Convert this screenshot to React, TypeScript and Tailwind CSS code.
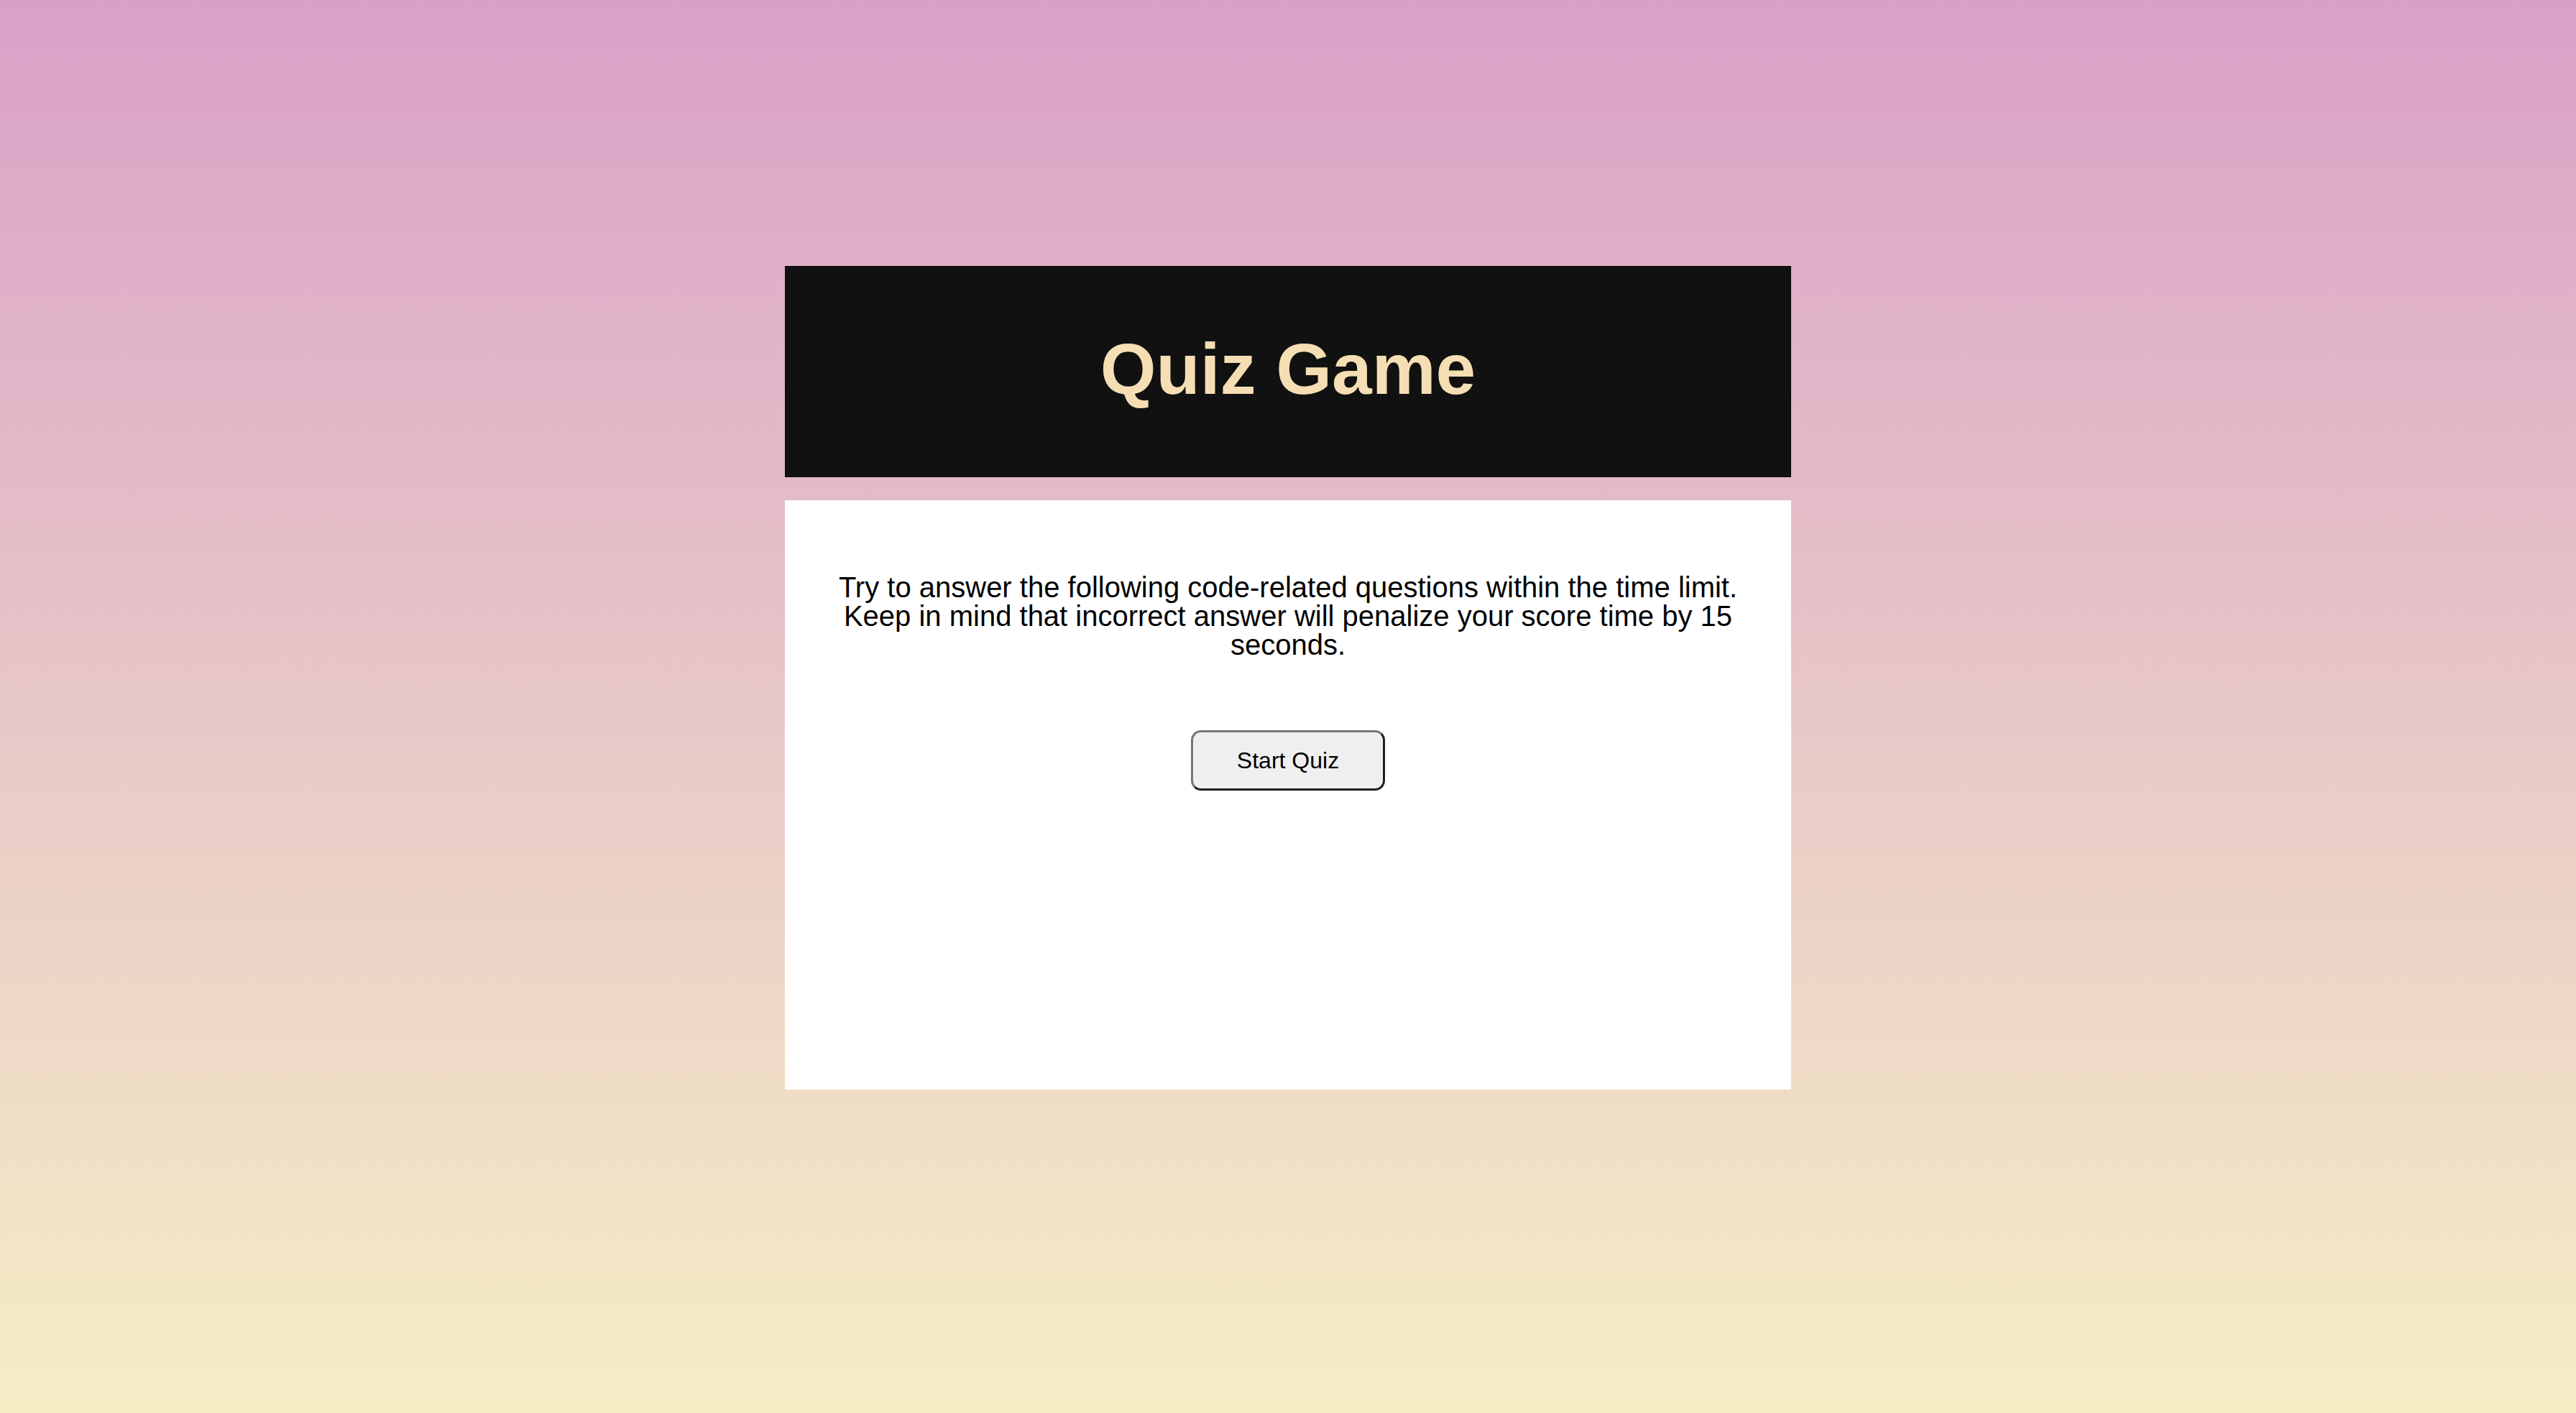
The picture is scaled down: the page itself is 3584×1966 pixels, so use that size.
export default function App() {
  return (
    <div className="min-h-screen bg-linear-to-b from-[#d9a0c7] to-[#f5eec5] pt-[370px] font-['Liberation_Sans',Arial,sans-serif]">
      <div className="mx-auto flex w-[1400px] flex-col gap-8">
        <header className="flex h-[294px] items-center justify-center bg-[#111111] pb-[9px]">
          <h1 className="text-[100px] font-bold leading-none text-[#f5deb3]">
            Quiz Game
          </h1>
        </header>

        <main className="flex h-[820px] flex-col items-center bg-white px-8 pt-[101px]">
          <p className="text-center text-[40px] leading-[40px] text-black">
            Try to answer the following code-related questions within the time
            limit. Keep in mind that incorrect answer will penalize your score
            time by 15 seconds.
          </p>
          <button className="mt-[99px] flex h-[84px] w-[270px] items-center justify-center rounded-[14px] border-[3px] border-t-[#767676] border-l-[#767676] border-r-[#1f1f1f] border-b-[#1f1f1f] bg-[#efefef] text-[32px] text-black">
            Start Quiz
          </button>
        </main>
      </div>
    </div>
  );
}
